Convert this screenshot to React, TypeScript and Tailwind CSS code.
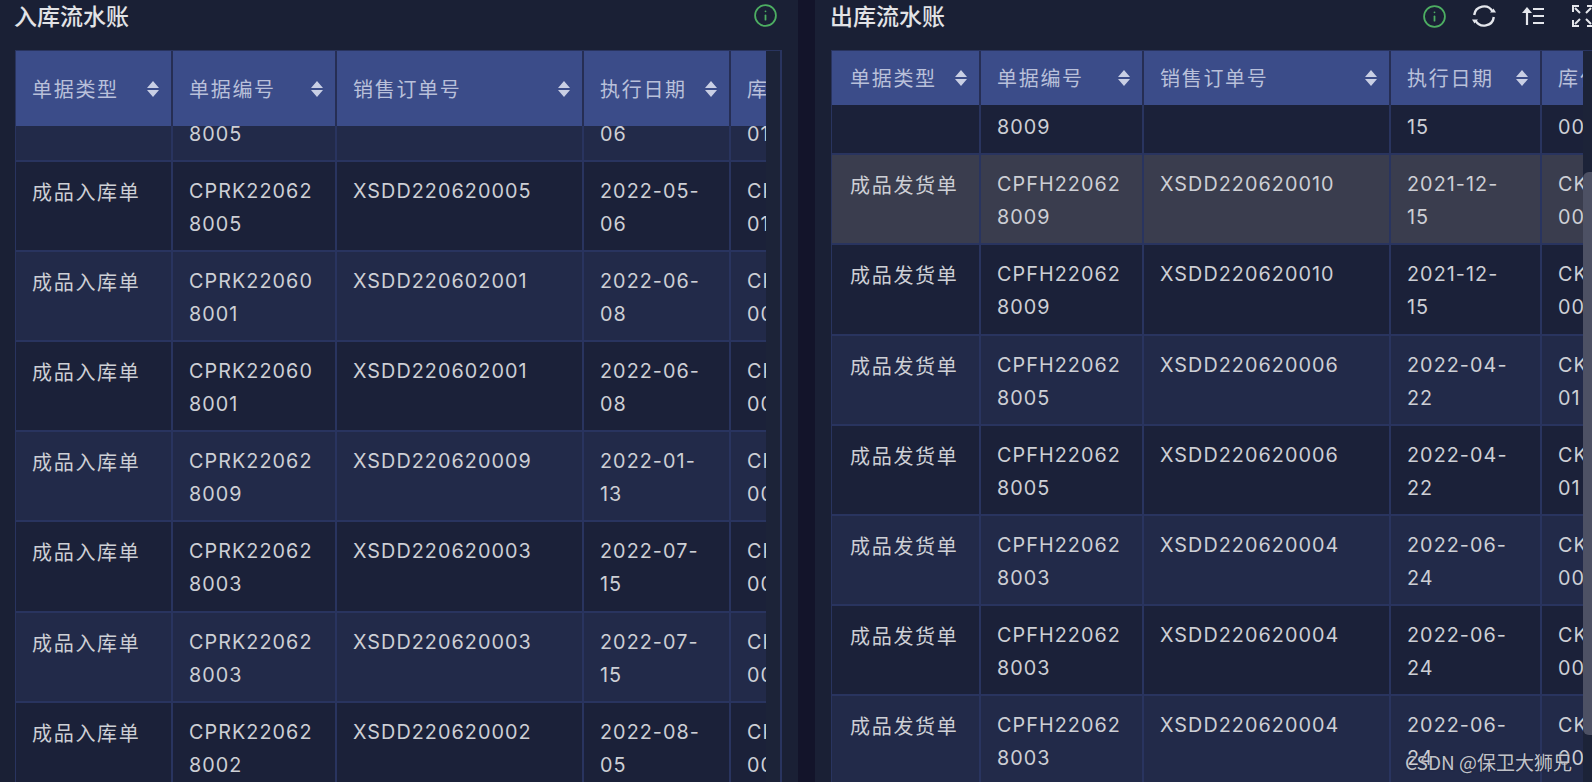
import type { ReactNode } from 'react';
import { Info } from 'lucide-react';

const cjkFont = "font-['Noto_Sans_CJK_SC','Noto_Sans',sans-serif]";
const numFont = "font-['Inter','Noto_Sans_CJK_SC',sans-serif]";

type Row = string[];

const inRows: Row[] = [
    ['', '\n8005', '', '\n06', '\n01'],
    ['成品入库单', 'CPRK22062\n8005', 'XSDD220620005', '2022-05-\n06', 'CKRK\n01'],
    ['成品入库单', 'CPRK22060\n8001', 'XSDD220602001', '2022-06-\n08', 'CKRK\n00'],
    ['成品入库单', 'CPRK22060\n8001', 'XSDD220602001', '2022-06-\n08', 'CKRK\n00'],
    ['成品入库单', 'CPRK22062\n8009', 'XSDD220620009', '2022-01-\n13', 'CKRK\n00'],
    ['成品入库单', 'CPRK22062\n8003', 'XSDD220620003', '2022-07-\n15', 'CKRK\n00'],
    ['成品入库单', 'CPRK22062\n8003', 'XSDD220620003', '2022-07-\n15', 'CKRK\n00'],
    ['成品入库单', 'CPRK22062\n8002', 'XSDD220620002', '2022-08-\n05', 'CKRK\n00'],
];

const outRows: Row[] = [
    ['', '\n8009', '', '\n15', '\n00'],
    ['成品发货单', 'CPFH22062\n8009', 'XSDD220620010', '2021-12-\n15', 'CKCK\n00'],
    ['成品发货单', 'CPFH22062\n8009', 'XSDD220620010', '2021-12-\n15', 'CKCK\n00'],
    ['成品发货单', 'CPFH22062\n8005', 'XSDD220620006', '2022-04-\n22', 'CKCK\n01'],
    ['成品发货单', 'CPFH22062\n8005', 'XSDD220620006', '2022-04-\n22', 'CKCK\n01'],
    ['成品发货单', 'CPFH22062\n8003', 'XSDD220620004', '2022-06-\n24', 'CKCK\n00'],
    ['成品发货单', 'CPFH22062\n8003', 'XSDD220620004', '2022-06-\n24', 'CKCK\n00'],
    ['成品发货单', 'CPFH22062\n8003', 'XSDD220620004', '2022-06-\n24', 'CKCK\n00'],
];

const heads = ['单据类型', '单据编号', '销售订单号', '执行日期', '库位'];

const leftCols = ['w-[157px]', 'w-[164px]', 'w-[247px]', 'w-[147px]', 'w-[200px]'];
const rightCols = ['w-[149px]', 'w-[163px]', 'w-[247px]', 'w-[151px]', 'w-[200px]'];

function SortCaret() {
    return (
        <svg width="12" height="16" viewBox="0 0 12 16" className="shrink-0">
            <path d="M6 0 L12 7 H0 Z M0 9 H12 L6 16 Z" fill="#c9cfe4" />
        </svg>
    );
}

function SyncIcon() {
    return (
        <svg width="26" height="26" viewBox="0 0 26 26" fill="none" stroke="#e4e6ec" strokeWidth="2.4">
            <path d="M3.2 12 A9.8 9.8 0 0 1 21.5 8.5" />
            <path d="M22.8 14 A9.8 9.8 0 0 1 4.5 17.5" />
            <path d="M25 9.5 H19 L22.5 5.5 Z" fill="#e4e6ec" stroke="none" />
            <path d="M1 16.5 H7 L3.5 20.5 Z" fill="#e4e6ec" stroke="none" />
        </svg>
    );
}

function SortLinesIcon() {
    return (
        <svg width="24" height="22" viewBox="0 0 24 22" fill="none" stroke="#e4e6ec" strokeWidth="2.2">
            <path d="M6 20 V4" />
            <path d="M6 2 L11 8 H1 Z" fill="#e4e6ec" stroke="none" />
            <path d="M12 4 H23 M12 11 H23 M12 18 H23" />
        </svg>
    );
}

function ExpandIcon() {
    return (
        <svg width="22" height="22" viewBox="0 0 22 22" fill="none" stroke="#e4e6ec" strokeWidth="2" className="shrink-0 ml-[3px]">
            <path d="M1 7 V1 H7 M15 1 H21 V7 M21 15 V21 H15 M7 21 H1 V15" />
            <path d="M3 3 L8 8 M19 3 L14 8 M19 19 L14 14 M3 19 L8 14" />
        </svg>
    );
}

function InfoIcon() {
    return <Info size={25} color="#4dae62" strokeWidth={1.7} />;
}

function Table({ cols, rows, headH, shift, firstPad, hoverRow, oddLight }: {
    cols: string[];
    rows: Row[];
    headH: string;
    shift: string;
    firstPad: string;
    hoverRow?: number;
    oddLight: boolean;
}) {
    return (
        <div className="flex-1 min-w-0 h-full overflow-hidden flex flex-col border-l border-[#29345f]">
            <div className={`flex shrink-0 relative z-10 bg-[#262e54] ${headH}`}>
                {heads.map((h, i) => (
                    <div
                        key={h}
                        className={`${cols[i]} ${i === 0 ? firstPad : 'pl-[16px]'} shrink-0 flex items-center justify-between pr-[12px] bg-[#3b4c89] border-r-2 border-[#262e54] text-[#b9c0da] text-[20px] tracking-[1.7px] ${cjkFont}`}
                    >
                        <span className="whitespace-nowrap">{h}</span>
                        {i < 4 && <SortCaret />}
                    </div>
                ))}
            </div>
            <div className={`shrink-0 ${shift}`}>
                {rows.map((row, r) => {
                    const light = (r % 2 === 0) === oddLight;
                    const bg = r === hoverRow ? 'bg-[#3a3d4e]' : light ? 'bg-[#222a49]' : 'bg-[#1b2139]';
                    return (
                        <div key={r} className={`flex h-[90.2px] border-b-2 border-[#29345f] ${bg}`}>
                            {row.map((cell, c) => (
                                <div
                                    key={c}
                                    className={`${cols[c]} ${c === 0 ? `${firstPad} ${cjkFont} text-[20px] tracking-[1.7px]` : `pl-[16px] ${numFont} text-[19.8px] tracking-[1.05px]`} shrink-0 pt-[13px] border-r-2 border-[#29345f] text-[#cdcfd5] leading-[33px] whitespace-pre-line`}
                                >
                                    {cell}
                                </div>
                            ))}
                        </div>
                    );
                })}
            </div>
        </div>
    );
}

function PanelTitle({ title, children }: { title: string; children: ReactNode }) {
    return (
        <div className="h-[50px] shrink-0 flex justify-between pt-[2px]">
            <h2 className={`-ml-px text-[23px] leading-[27px] font-medium text-[#e2e3e6] ${cjkFont}`}>{title}</h2>
            <div className="flex items-start h-[26px] pt-px">{children}</div>
        </div>
    );
}

export default function App() {
    return (
        <div className="relative h-[782px] w-full overflow-hidden flex bg-[#13142a]">
            {/* 入库流水账 */}
            <section className="w-[798px] shrink-0 h-full flex flex-col bg-[#1a2035] pl-[15px] pr-[16px]">
                <PanelTitle title="入库流水账">
                    <div className="mr-[4px]"><InfoIcon /></div>
                </PanelTitle>
                <div className="flex-1 min-h-0 flex border-t border-[#29345f]">
                    <Table cols={leftCols} rows={inRows} headH="h-[75px]" shift="-mt-[54.5px]" firstPad="pl-[16px]" oddLight />
                    <div className="w-[16px] shrink-0 bg-[#1c2338] border-r-2 border-[#29345f]" />
                </div>
            </section>

            {/* 出库流水账 */}
            <section className="ml-[17px] flex-1 min-w-0 h-full flex flex-col bg-[#1a2035] pl-[16px]">
                <PanelTitle title="出库流水账">
                    <div className="flex items-center gap-[24px] -mr-[2px]">
                        <InfoIcon />
                        <SyncIcon />
                        <SortLinesIcon />
                        <ExpandIcon />
                    </div>
                </PanelTitle>
                <div className="flex-1 min-h-0 flex border-t border-[#29345f]">
                    <Table cols={rightCols} rows={outRows} headH="h-[54px]" shift="-mt-[40px]" firstPad="pl-[18px]" hoverRow={1} oddLight={false} />
                    <div className="w-[9px] shrink-0 bg-[#1c2338] pt-[121px]">
                        <div className="h-[563px] rounded-l-md bg-[#4d5164]" />
                    </div>
                </div>
            </section>

            {/* 水印 */}
            <div className={`absolute left-[1405px] top-[749px] text-[19px] leading-[26px] whitespace-nowrap text-[#d6d8dc]/90 [text-shadow:0_0_2px_#20243a] ${cjkFont}`}>
                CSDN @保卫大狮兄
            </div>
        </div>
    );
}
